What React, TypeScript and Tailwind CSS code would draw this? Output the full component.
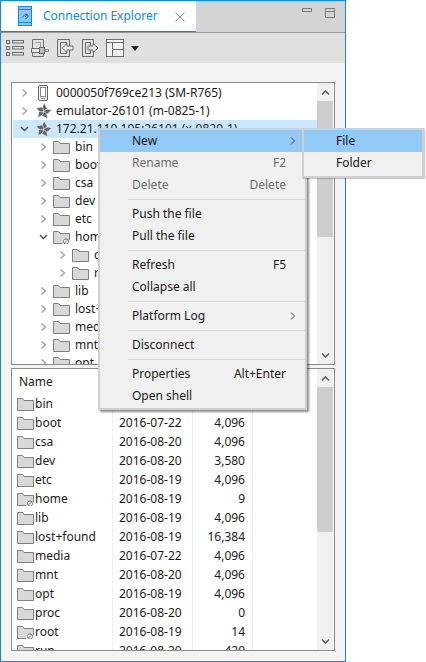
import React from "react";

const Folder = ({ link = false }: { link?: boolean }) => (
  <svg width="17" height="14" viewBox="0 0 17 14" className="shrink-0">
    <path d="M0.5 13.5V1.5H5.5L7 3.5H16.5V13.5Z" fill="#d8d8d8" stroke="#7f7f7f" />
    {link && (
      <>
        <path d="M9 14L11 10H17V14Z" fill="#ffffff" />
        <circle cx="13" cy="11.5" r="2.6" fill="none" stroke="#777777" />
        <path d="M11.5 13L14.5 10" stroke="#777777" />
      </>
    )}
  </svg>
);

const Chevron = ({ open = false, color = "#a6a6a6" }: { open?: boolean; color?: string }) => (
  <svg width="9" height="10" viewBox="0 0 9 10" className="shrink-0">
    {open ? (
      <path d="M1 3L4.5 6.5L8 3" fill="none" stroke="#555555" strokeWidth="1.5" />
    ) : (
      <path d="M2.5 1.5L6.5 5L2.5 8.5" fill="none" stroke={color} strokeWidth="1.5" />
    )}
  </svg>
);

const Pinwheel = () => (
  <svg width="17" height="17" viewBox="0 0 17 17" className="shrink-0">
    {[0, 72, 144, 216, 288].map((a) => (
      <path key={a} d="M8.5 8.5C6.8 6 7 3 9.8 0.3C10 3 12.2 4 12.2 6.2C11 7.6 10 8 8.5 8.5Z" fill="#666666" stroke="#ffffff" strokeWidth="0.5" transform={`rotate(${a} 8.5 8.5)`} />
    ))}
  </svg>
);

const Phone = () => (
  <svg width="16" height="16" viewBox="0 0 16 16" className="shrink-0">
    <rect x="3.5" y="0.5" width="9" height="15" rx="1.5" fill="#f4f4f4" stroke="#666666" />
    <rect x="5.5" y="2.5" width="5" height="9" fill="#ffffff" stroke="#8a8a8a" />
    <path d="M6 13.5H10" stroke="#888888" />
  </svg>
);

const ScrollBar = ({ thumbTop, thumbHeight }: { thumbTop: number; thumbHeight: number }) => (
  <div className="absolute right-[1px] top-0 bottom-0 w-[16px] bg-[#f0f0f0] flex flex-col">
    <div className="h-[18px] flex items-center justify-center shrink-0">
      <svg width="9" height="7" viewBox="0 0 9 7"><path d="M1 5.5L4.5 2L8 5.5" fill="none" stroke="#606060" strokeWidth="1.6" /></svg>
    </div>
    <div className="flex-1 relative">
      <div className="absolute left-0 right-0 bg-[#cdcdcd]" style={{ top: thumbTop, height: thumbHeight }} />
    </div>
    <div className="h-[18px] flex items-center justify-center shrink-0">
      <svg width="9" height="7" viewBox="0 0 9 7"><path d="M1 1.5L4.5 5L8 1.5" fill="none" stroke="#606060" strokeWidth="1.6" /></svg>
    </div>
  </div>
);

type TreeItem = { name: string; depth: number; icon: "phone" | "pin" | "folder" | "link"; open?: boolean; selected?: boolean };
const tree: TreeItem[] = [
  { name: "0000050f769ce213 (SM-R765)", depth: 0, icon: "phone" },
  { name: "emulator-26101 (m-0825-1)", depth: 0, icon: "pin" },
  { name: "172.21.110.195:26101 (x-0829-1)", depth: 0, icon: "pin", open: true, selected: true },
  { name: "bin", depth: 1, icon: "folder" },
  { name: "boot", depth: 1, icon: "folder" },
  { name: "csa", depth: 1, icon: "folder" },
  { name: "dev", depth: 1, icon: "folder" },
  { name: "etc", depth: 1, icon: "folder" },
  { name: "home", depth: 1, icon: "link", open: true },
  { name: "developer", depth: 2, icon: "folder" },
  { name: "root", depth: 2, icon: "folder" },
  { name: "lib", depth: 1, icon: "folder" },
  { name: "lost+found", depth: 1, icon: "folder" },
  { name: "media", depth: 1, icon: "folder" },
  { name: "mnt", depth: 1, icon: "folder" },
  { name: "opt", depth: 1, icon: "folder" },
];

const rows: [string, string, string, boolean?][] = [
  ["bin", "2016-08-19", "4,096"],
  ["boot", "2016-07-22", "4,096"],
  ["csa", "2016-08-20", "4,096"],
  ["dev", "2016-08-20", "3,580"],
  ["etc", "2016-08-19", "4,096"],
  ["home", "2016-08-19", "9", true],
  ["lib", "2016-08-19", "4,096"],
  ["lost+found", "2016-08-19", "16,384"],
  ["media", "2016-07-22", "4,096"],
  ["mnt", "2016-08-20", "4,096"],
  ["opt", "2016-08-19", "4,096"],
  ["proc", "2016-08-20", "0"],
  ["root", "2016-08-19", "14", true],
  ["run", "2016-08-20", "420"],
];

const Sep = () => <div className="h-[7px] flex items-center pl-[28px]"><div className="h-px w-full bg-[#d7d7d7]" /></div>;

const Item = ({ label, hot, off, keys, arrow }: { label: string; hot?: boolean; off?: boolean; keys?: string; arrow?: boolean }) => (
  <div className={`h-[22px] flex items-center pl-[32px] pr-[8px] ${hot ? "bg-[#91c9f7]" : ""} ${off ? "text-[#6d6d6d]" : "text-[#1a1a1a]"}`}>
    <span className="flex-1">{label}</span>
    {keys && <span className="mr-[11px]">{keys}</span>}
    {arrow && (
      <svg width="7" height="10" viewBox="0 0 7 10" className="mr-[1px]"><path d="M2 1.5L5.5 5L2 8.5" fill="none" stroke="#444444" /></svg>
    )}
  </div>
);

export default function App() {
  return (
    <div className="relative w-[426px] h-[662px] bg-white overflow-hidden text-[12px] leading-none text-[#1a1a1a]" style={{ fontFamily: '"Noto Sans", sans-serif' }}>
      <div className="w-[346px] h-[662px] border border-[#0a8be8] bg-[#f3f3f3] flex flex-col">
        <div className="h-[32px] shrink-0 bg-[#d4d4d4] border-b border-[#969696] flex justify-between">
          <div className="w-[195px] h-[31px] bg-white border-b-[1px] border-[#0a8be8] -mb-px flex items-center pl-[17px] relative">
            <svg width="14" height="20" viewBox="0 0 14 20" className="shrink-0">
              <rect x="0.5" y="0.5" width="13" height="19" fill="#8cc6f5" stroke="#0a8be8" />
              <path d="M0.5 3.5H13.5M0.5 16.5H13.5" stroke="#0a8be8" />
              <path d="M4 11.5L7 8.5A2 2 0 0 1 10 10.5L7.5 13M7 11L9.5 8" fill="none" stroke="#0a6fc0" />
            </svg>
            <span className="ml-[11px] text-[#0a8be8] whitespace-nowrap">Connection Explorer</span>
            <svg width="10" height="10" viewBox="0 0 10 10" className="absolute left-[174px] top-[11px]"><path d="M0.5 0.5L9.5 9.5M9.5 0.5L0.5 9.5" stroke="#8a8a8a" /></svg>
          </div>
          <div className="flex items-start pt-[7px] pr-[10px] gap-[13px]">
            <div className="w-[10px] h-[4px] border border-[#7f7f7f]" />
            <div className="w-[10px] h-[10px] border border-[#7f7f7f] pt-[2px]"><div className="h-px bg-[#7f7f7f]" /></div>
          </div>
        </div>

        <div className="h-[30px] shrink-0 bg-[#e0e0e0] flex items-center pl-[5px] gap-[7px]">
          <svg width="18" height="18" viewBox="0 0 18 18">
            <g fill="none" stroke="#6e6e6e"><rect x="0.5" y="1.5" width="3" height="3" /><rect x="0.5" y="7.5" width="3" height="3" /><rect x="0.5" y="13.5" width="3" height="3" /><rect x="6.5" y="1.5" width="11" height="2.5" /><rect x="6.5" y="7.5" width="11" height="2.5" /><rect x="6.5" y="13.5" width="11" height="2.5" /></g>
          </svg>
          <svg width="18" height="18" viewBox="0 0 18 18">
            <path d="M1.5 0.5H12.5V17.5H1.5Z" fill="none" stroke="#6e6e6e" />
            <path d="M4.5 3.5H9.5V9" fill="none" stroke="#9a9a9a" />
            <path d="M0.5 9.5H8.5V13.5H0.5Z" fill="#e8e8e8" stroke="#6e6e6e" />
            <rect x="8.5" y="8.5" width="5" height="6" fill="#bdbdbd" stroke="#6e6e6e" />
            <path d="M14 10.5H17.5V12.5H14Z" fill="#e8e8e8" stroke="#6e6e6e" strokeWidth="0.8" />
          </svg>
          <svg width="18" height="18" viewBox="0 0 18 18">
            <path d="M1.5 0.5H13.5V17.5H1.5Z M4.5 3.5H10.5V14.5H4.5Z" fill="none" stroke="#6e6e6e" />
            <path d="M6.5 9L11 4.5V7H17V11H11V13.5Z" fill="#ececec" stroke="#6e6e6e" />
          </svg>
          <svg width="18" height="18" viewBox="0 0 18 18">
            <path d="M1.5 0.5H12.5V17.5H1.5Z M4.5 3.5H9.5V14.5H4.5Z" fill="none" stroke="#6e6e6e" />
            <path d="M17 9L12 4.5V7H7V11H12V13.5Z" fill="#ececec" stroke="#6e6e6e" />
          </svg>
          <svg width="18" height="18" viewBox="0 0 18 18">
            <rect x="0.5" y="0.5" width="17" height="17" fill="#f2f2f2" stroke="#6e6e6e" />
            <path d="M0.5 3.5H17.5M6.5 3.5V17.5M6.5 10.5H17.5" stroke="#6e6e6e" fill="none" />
          </svg>
          <svg width="8" height="5" viewBox="0 0 8 5"><path d="M0 0H8L4 5Z" fill="#222222" /></svg>
        </div>

        <div className="flex-1 flex flex-col pt-[19px] pl-[10px] pr-[10px] pb-[10px] min-h-0">
          <div className="relative h-[283px] shrink-0 border border-[#8c8c8c] bg-white overflow-hidden">
            <div className="pt-[1px]">
              {tree.map((t) => (
                <div key={t.name} className={`h-[18px] flex items-center whitespace-nowrap ${t.selected ? "bg-[#cce8ff] ml-[1px] mr-[17px]" : ""}`} style={{ paddingLeft: (t.selected ? 7 : 8) + t.depth * 19 }}>
                  <Chevron open={t.open} />
                  <span className={`flex ${t.icon === "pin" ? "ml-[6px] mr-[4px]" : t.icon === "phone" ? "ml-[6px] mr-[5px]" : "ml-[5px] mr-[5px]"}`}>
                    {t.icon === "phone" && <Phone />}
                    {t.icon === "pin" && <Pinwheel />}
                    {t.icon === "folder" && <Folder />}
                    {t.icon === "link" && <Folder link />}
                  </span>
                  <span>{t.name}</span>
                </div>
              ))}
            </div>
            <ScrollBar thumbTop={0} thumbHeight={136} />
          </div>
          <div className="relative mt-[3px] flex-1 min-h-0 border border-[#8c8c8c] bg-white overflow-hidden">
            <div className="h-[25px] flex items-center pl-[7px]">Name</div>
            {rows.map(([n, d, s, link]) => (
              <div key={n} className="h-[19px] flex items-center whitespace-nowrap">
                <div className="w-[101px] h-full border-r border-[#e8f0fb] flex items-center pl-[5px] gap-[1px]">
                  <Folder link={!!link} />
                  <span>{n}</span>
                </div>
                <div className="w-[80px] h-full border-r border-[#e8f0fb] flex items-center pl-[6px]">{d}</div>
                <div className="w-[60px] h-full border-r border-[#e8f0fb] flex items-center justify-end pr-[7px]">{s}</div>
              </div>
            ))}
            <ScrollBar thumbTop={0} thumbHeight={145} />
          </div>
        </div>
      </div>

      <div className="absolute left-[98px] top-[128px] w-[209px] h-[282px] bg-[#f0f0f0] border-2 border-[#d0d0d0] shadow-[2px_2px_2px_rgba(0,0,0,0.45)]">
        <Item label="New" hot arrow />
        <Item label="Rename" off keys="F2" />
        <Item label="Delete" off keys="Delete" />
        <Sep />
        <Item label="Push the file" />
        <Item label="Pull the file" />
        <Sep />
        <Item label="Refresh" keys="F5" />
        <Item label="Collapse all" />
        <Sep />
        <Item label="Platform Log" arrow />
        <Sep />
        <Item label="Disconnect" />
        <Sep />
        <Item label="Properties" keys="Alt+Enter" />
        <Item label="Open shell" />
      </div>

      <div className="absolute left-[302px] top-[128px] w-[122px] h-[50px] bg-[#f0f0f0] border-2 border-[#d0d0d0] shadow-[1px_1px_1px_rgba(0,0,0,0.2)]">
        <Item label="File" hot />
        <Item label="Folder" />
      </div>
    </div>
  );
}
